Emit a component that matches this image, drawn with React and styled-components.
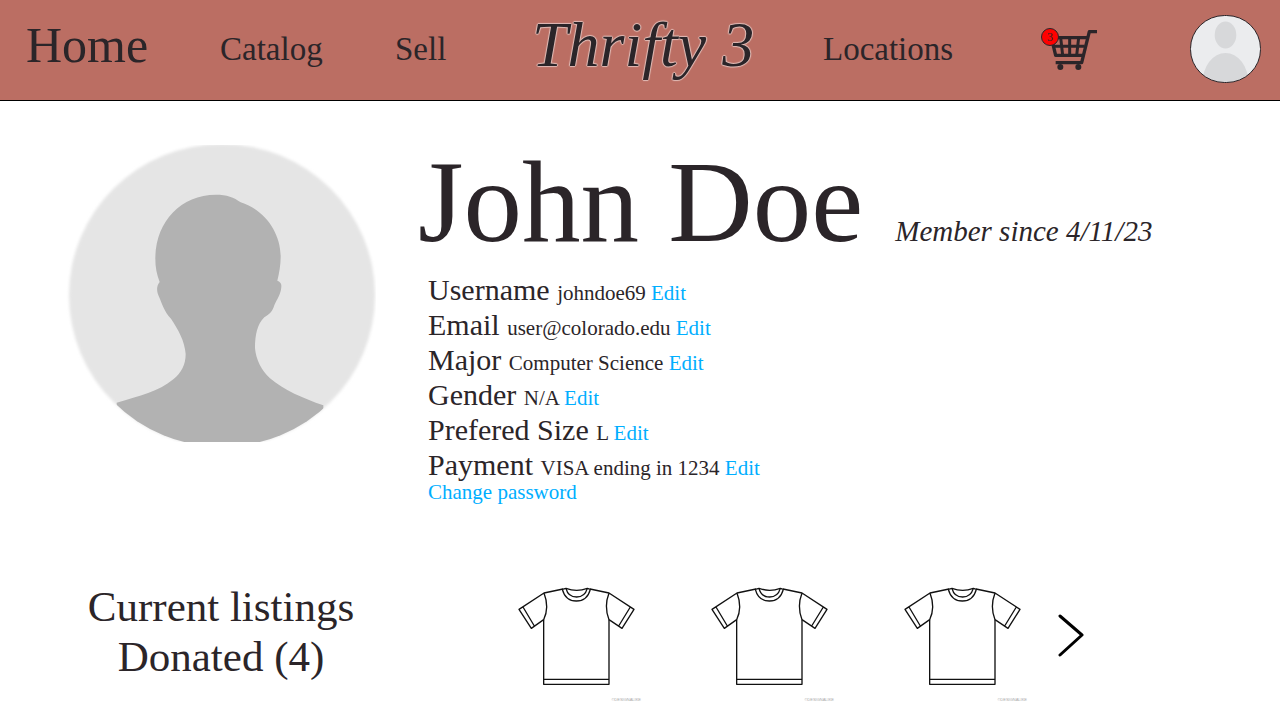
import React from "react";
import styled, { createGlobalStyle } from "styled-components";

const GlobalStyle = createGlobalStyle`
  *, *::before, *::after { box-sizing: border-box; }
  body {
    margin: 0;
    background: #ffffff;
    color: #2b2529;
    font-family: Baskerville, "Liberation Serif", "Times New Roman", serif;
  }
  svg { display: block; }
`;

const Header = styled.header`
  background: #bb6e63;
  border-bottom: 1px solid #000000;
`;

const Nav = styled.nav`
  display: grid;
  grid-template-columns: 194fr 175fr 137fr 291fr 218fr 149fr auto;
  align-items: center;
  height: 100px;
  padding: 0 19px 2px 26px;
`;

const NavLink = styled.a`
  justify-self: start;
  padding-bottom: ${(p) => (p.$large ? "8px" : "0")};
  color: inherit;
  font-size: ${(p) => (p.$large ? "50px" : "33px")};
  line-height: 60px;
  text-decoration: none;
`;

const Logo = styled.a`
  justify-self: start;
  padding-bottom: 8px;
  color: inherit;
  font-size: 64px;
  font-style: italic;
  line-height: 80px;
  text-decoration: none;
  white-space: nowrap;
  text-shadow: 0 0 1px #e8c9c4, 1px 0 1px #e0bab4, -1px 0 1px #e0bab4,
    0 1px 1px #e0bab4, 0 -1px 1px #e0bab4;
`;

const CartLink = styled.a`
  position: relative;
  justify-self: start;
  color: inherit;
  text-decoration: none;
`;

const CartBadge = styled.span`
  position: absolute;
  top: 0;
  left: 0;
  width: 18px;
  height: 18px;
  border: 1px solid #2b2529;
  border-radius: 50%;
  background: #ff0000;
  font-size: 12px;
  line-height: 16px;
  text-align: center;
`;

const AccountLink = styled.a`
  display: block;
`;

const Main = styled.main`
  padding: 43px 66px 0;
`;

const Columns = styled.section`
  display: grid;
  grid-template-columns: 310px 1fr;
  column-gap: 42px;
  margin-top: ${(p) => (p.$spaced ? "79px" : "0")};
`;

const Portrait = styled.div`
  padding-top: 1px;
`;

const NameRow = styled.div`
  display: flex;
  align-items: baseline;
  gap: 32px;
`;

const Name = styled.h1`
  margin: 0;
  font-size: 117px;
  font-weight: 400;
  line-height: 116px;
`;

const Since = styled.p`
  margin: 0;
  font-size: 29px;
  font-style: italic;
  line-height: 32px;
`;

const Details = styled.ul`
  margin: 12px 0 0;
  padding: 0 0 0 10px;
  list-style: none;
`;

const Detail = styled.li`
  font-size: 30px;
  line-height: 35px;
`;

const Value = styled.span`
  font-size: 21px;
  line-height: 1;
`;

const Action = styled.a`
  color: #00aeff;
  font-size: 21px;
  line-height: 1;
  text-decoration: none;
`;

const PasswordItem = styled.li`
  font-size: 21px;
  line-height: 20px;
`;

const ListingsTitle = styled.h2`
  margin: 0;
  font-size: 43px;
  font-weight: 400;
  line-height: 50px;
  text-align: center;
`;

const Listings = styled.div`
  display: flex;
  align-items: flex-start;
  gap: 28px;
  padding: 2px 0 0 94px;
`;

const Shirts = styled.div`
  display: flex;
  gap: 61px;
`;

const ShirtCard = styled.figure`
  margin: 0;
`;

const Credit = styled.figcaption`
  padding: 3px 3px 0 0;
  color: #a8a8a8;
  font-family: "Liberation Sans", Arial, sans-serif;
  font-size: 4px;
  line-height: 6px;
  text-align: right;
`;

const NextButton = styled.button`
  margin: 30px 0 0;
  padding: 0;
  border: 0;
  background: none;
  cursor: pointer;
`;

const details = [
  ["Username", "johndoe69"],
  ["Email", "user@colorado.edu"],
  ["Major", "Computer Science"],
  ["Gender", "N/A"],
  ["Prefered Size", "L"],
  ["Payment", "VISA ending in 1234"],
];

function CartIcon() {
  return (
    <svg width="56" height="42" viewBox="33 24 168 126" fill="none" stroke="#2b2529" aria-hidden="true">
      <path d="M201 35H178L155 128H77" strokeWidth="10" strokeLinejoin="round" />
      <path d="M64 53H172M64 53L77 106H160" strokeWidth="10" strokeLinejoin="round" />
      <path d="M70 79H164M92 53L98 106M119 53V106M146 53L140 106" strokeWidth="9" />
      <circle cx="91" cy="141" r="9" fill="#2b2529" stroke="none" />
      <circle cx="145" cy="141" r="9" fill="#2b2529" stroke="none" />
    </svg>
  );
}

function AccountIcon() {
  return (
    <svg width="71" height="68" viewBox="0 0 71 68" aria-hidden="true">
      <clipPath id="account-clip">
        <rect x="1" y="1" width="69" height="66" rx="34" ry="33" />
      </clipPath>
      <rect x="0.5" y="0.5" width="70" height="67" rx="34" ry="33" fill="#ebecee" />
      <g fill="#d7d8da" clipPath="url(#account-clip)">
        <ellipse cx="35.5" cy="20" rx="10.8" ry="13.5" />
        <ellipse cx="35.5" cy="68" rx="23" ry="30" />
      </g>
      <rect x="0.5" y="0.5" width="70" height="67" rx="34" ry="33" fill="none" stroke="#2b2529" />
    </svg>
  );
}

function PortraitImage() {
  return (
    <svg width="310" height="297" viewBox="48 45 930 891" role="img" aria-label="Profile picture">
      <defs>
        <clipPath id="portrait-clip">
          <ellipse cx="516" cy="496" rx="459" ry="454" />
        </clipPath>
        <filter id="soft-edge" x="-5%" y="-5%" width="110%" height="110%">
          <feGaussianBlur stdDeviation="4" />
        </filter>
      </defs>
      <g filter="url(#soft-edge)">
        <ellipse cx="516" cy="496" rx="459" ry="454" fill="#e5e5e5" />
      </g>
      <path
        clipPath="url(#portrait-clip)"
        fill="#b2b2b2"
        d="M498 194C530 194 552 202 572 217C642 238 692 306 692 380C692 405 688 427 682 452C690 455 695 460 694 470C693 492 681 507 673 526C668 543 660 552 643 562C622 582 615 615 615 655C618 690 635 722 660 745C702 780 760 806 820 826V960H200V818C270 798 325 785 370 748C395 727 407 704 407 672C404 632 384 598 363 566C342 544 336 520 327 500C320 486 318 470 329 456C320 432 316 412 316 386C316 278 390 194 498 194Z"
      />
    </svg>
  );
}

function ShirtImage() {
  return (
    <svg
      width="132"
      height="110"
      viewBox="36 42 396 330"
      fill="none"
      stroke="#111111"
      strokeWidth="4"
      strokeLinejoin="round"
      role="img"
      aria-label="T-shirt"
    >
      <path d="M131 149V343H327V149M131 328H327" />
      <path d="M189 57L132 69L57 118L94 175L131 149C143 124 142 95 132 69M69 111L103 168" />
      <path d="M270 57L327 69L402 118L366 175L327 149C317 124 317 95 327 69M391 111L356 168" />
      <path d="M187 58L198 55Q230 67 262 55L271 58C265 81 250 93 229 93S193 81 187 58Z" />
      <path d="M198 55C202 72 213 81 230 81S257 72 262 55" />
    </svg>
  );
}

export default function App() {
  return (
    <>
      <GlobalStyle />
      <Header>
        <Nav aria-label="Main">
          <NavLink href="#home" $large>Home</NavLink>
          <NavLink href="#catalog">Catalog</NavLink>
          <NavLink href="#sell">Sell</NavLink>
          <Logo href="#home">Thrifty 3</Logo>
          <NavLink href="#locations">Locations</NavLink>
          <CartLink href="#cart" aria-label="Cart, 3 items">
            <CartIcon />
            <CartBadge>3</CartBadge>
          </CartLink>
          <AccountLink href="#account" aria-label="Account">
            <AccountIcon />
          </AccountLink>
        </Nav>
      </Header>
      <Main>
        <Columns>
          <Portrait>
            <PortraitImage />
          </Portrait>
          <div>
            <NameRow>
              <Name>John Doe</Name>
              <Since>Member since 4/11/23</Since>
            </NameRow>
            <Details>
              {details.map(([label, value]) => (
                <Detail key={label}>
                  {label} <Value>{value} </Value>
                  <Action href="#edit" aria-label={`Edit ${label}`}>Edit</Action>
                </Detail>
              ))}
              <PasswordItem>
                <Action href="#password">Change password</Action>
              </PasswordItem>
            </Details>
          </div>
        </Columns>
        <Columns $spaced>
          <ListingsTitle>
            Current listings
            <br />
            Donated (4)
          </ListingsTitle>
          <Listings>
            <Shirts>
              {[1, 2, 3].map((id) => (
                <ShirtCard key={id}>
                  <ShirtImage />
                  <Credit>©DESIGNALIKE</Credit>
                </ShirtCard>
              ))}
            </Shirts>
            <NextButton type="button" aria-label="Next listings">
              <svg width="26" height="44" viewBox="0 0 26 44" fill="none" stroke="#000000" strokeWidth="3">
                <path d="M2 2L24 21L2 41" strokeLinecap="round" strokeLinejoin="round" />
              </svg>
            </NextButton>
          </Listings>
        </Columns>
      </Main>
    </>
  );
}
